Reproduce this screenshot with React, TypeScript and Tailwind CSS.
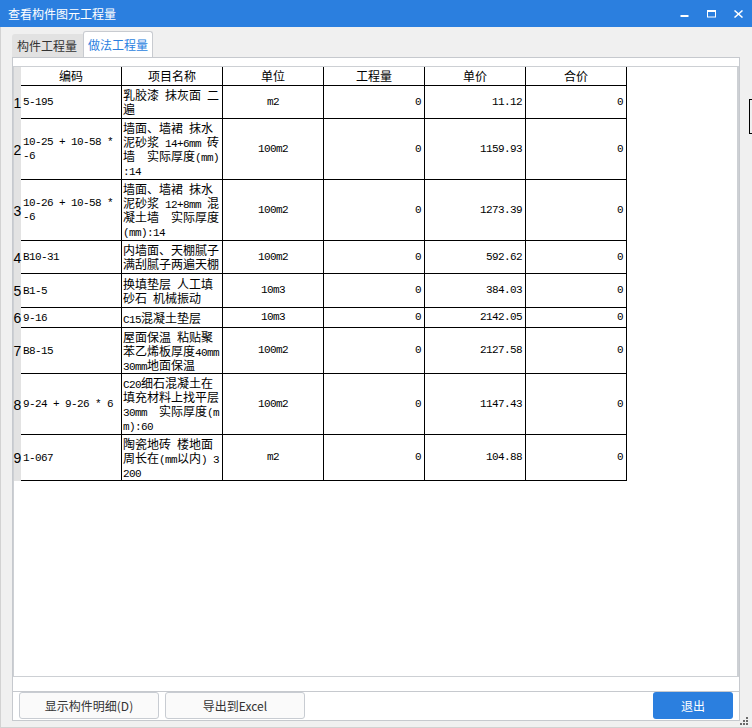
import React from "react";

const cjk = "font-['Noto_Sans_CJK_SC','Noto_Sans',sans-serif]";
const mono = "font-['Liberation_Mono',monospace] text-[11px] tracking-[-0.6px]";

type Row = {
  code: string[];
  name: string[];
  unit: string;
  price: string;
  h: string;
};

const rows: Row[] = [
  { code: ["5-195"], name: ["乳胶漆 抹灰面 二", "遍"], unit: "m2", price: "11.12", h: "h-[33px]" },
  {
    code: ["10-25 + 10-58 *", "-6"],
    name: ["墙面、墙裙 抹水", "泥砂浆 14+6mm 砖", "墙  实际厚度(mm)", ":14"],
    unit: "100m2",
    price: "1159.93",
    h: "h-[61px]",
  },
  {
    code: ["10-26 + 10-58 *", "-6"],
    name: ["墙面、墙裙 抹水", "泥砂浆 12+8mm 混", "凝土墙  实际厚度", "(mm):14"],
    unit: "100m2",
    price: "1273.39",
    h: "h-[61px]",
  },
  { code: ["B10-31"], name: ["内墙面、天棚腻子", "满刮腻子两遍天棚"], unit: "100m2", price: "592.62", h: "h-[33px]" },
  { code: ["B1-5"], name: ["换填垫层 人工填", "砂石 机械振动"], unit: "10m3", price: "384.03", h: "h-[34px]" },
  { code: ["9-16"], name: ["C15混凝土垫层"], unit: "10m3", price: "2142.05", h: "h-[20px]" },
  {
    code: ["B8-15"],
    name: ["屋面保温 粘贴聚", "苯乙烯板厚度40mm", "30mm地面保温"],
    unit: "100m2",
    price: "2127.58",
    h: "h-[46px]",
  },
  {
    code: ["9-24 + 9-26 * 6"],
    name: ["C20细石混凝土在", "填充材料上找平层", "30mm  实际厚度(m", "m):60"],
    unit: "100m2",
    price: "1147.43",
    h: "h-[61px]",
  },
  {
    code: ["1-067"],
    name: ["陶瓷地砖 楼地面", "周长在(mm以内) 3", "200"],
    unit: "m2",
    price: "104.88",
    h: "h-[46px]",
  },
];

// ascii runs get the narrow mono face, like the half-width glyphs in the screenshot
function Mix({ s }: { s: string }) {
  return (
    <>
      {s.split(/([\x20-\x7e]+)/).map((p, i) =>
        /[\x20-\x7e]/.test(p) ? (
          <span key={i} className={mono}>
            {p}
          </span>
        ) : (
          <span key={i}>{p}</span>
        )
      )}
    </>
  );
}

function Header() {
  const labels = ["编码", "项目名称", "单位", "工程量", "单价", "合价"];
  return (
    <div className="flex h-[19px]">
      <div className="w-[7px] bg-[#e3e3e3]" />
      <div className="flex border-b border-black">
        {labels.map((l) => (
          <div
            key={l}
            className={`w-[101px] border-r border-black flex items-center justify-center text-[12px] text-black ${cjk}`}
          >
            {l}
          </div>
        ))}
      </div>
    </div>
  );
}

function DataRow({ r, n }: { r: Row; n: number }) {
  return (
    <div className={`flex ${r.h}`}>
      <div className="w-[7px] bg-[#e3e3e3] flex items-center justify-center text-[14px] leading-none font-['Liberation_Sans',sans-serif] text-black">
        {n}
      </div>
      <div className="flex border-b border-black text-black">
        <div className="w-[101px] border-r border-black flex flex-col justify-center pl-[2px]">
          {r.code.map((c, i) => (
            <div key={i} className={`h-[14px] leading-[14px] whitespace-pre ${mono}`}>
              {c}
            </div>
          ))}
        </div>
        <div className={`w-[101px] border-r border-black flex flex-col justify-center pl-[1px] text-[12px] ${cjk}`}>
          {r.name.map((c, i) => (
            <div key={i} className="h-[14px] leading-[14px] whitespace-pre">
              <Mix s={c} />
            </div>
          ))}
        </div>
        <div className={`w-[101px] border-r border-black flex items-center justify-center ${mono}`}>{r.unit}</div>
        <div className={`w-[101px] border-r border-black flex items-center justify-end pr-[3px] ${mono}`}>0</div>
        <div className={`w-[101px] border-r border-black flex items-center justify-end pr-[3px] ${mono}`}>{r.price}</div>
        <div className={`w-[101px] border-r border-black flex items-center justify-end pr-[3px] ${mono}`}>0</div>
      </div>
    </div>
  );
}

export default function App() {
  return (
    <div className={`relative w-[752px] h-[728px] bg-[#f0f0f0] flex flex-col overflow-hidden ${cjk}`}>
      {/* Title bar */}
      <div className="h-[27px] bg-[#2b7fdf] flex items-center justify-between shrink-0">
        <span className="pl-[8px] text-[12px] text-white">查看构件图元工程量</span>
        <div className="flex h-full">
          <div className="w-[27px] flex items-center justify-center">
            <svg width="9" height="8" viewBox="0 0 9 8">
              <rect x="0.5" y="5" width="8" height="2" fill="white" />
            </svg>
          </div>
          <div className="w-[27px] flex items-center justify-center">
            <svg width="9" height="8" viewBox="0 0 9 8">
              <rect x="0.5" y="0.5" width="8" height="6.5" fill="none" stroke="white" strokeWidth="1" />
              <rect x="0.5" y="0.5" width="8" height="1.5" fill="white" />
            </svg>
          </div>
          <div className="w-[27px] flex items-center justify-center">
            <svg width="9" height="8" viewBox="0 0 9 8">
              <path d="M0.5 0.5 L8.5 7.5 M8.5 0.5 L0.5 7.5" stroke="white" strokeWidth="1.5" />
            </svg>
          </div>
        </div>
      </div>

      <div className="flex-1 flex flex-col border-l border-b border-[#d2d2d2]">
        {/* Tabs */}
        <div className="h-[30px] pl-[11px] flex items-end shrink-0">
          <div className="h-[23px] w-[71px] bg-[#e2e2e2] rounded-tl-[3px] flex items-center pl-[5px] text-[12px] text-[#333]">
            构件工程量
          </div>
          <div className="h-[26px] w-[70px] bg-white border border-b-0 border-[#c8cbd0] rounded-t-[3px] flex items-center justify-center text-[12px] text-[#2b7fdf]">
            做法工程量
          </div>
        </div>

        {/* Panel */}
        <div className="ml-[11px] w-[728px] h-[664px] border border-[#c6c9ce] bg-white flex flex-col">
          <div className="h-[8px]" />
          <div className="h-[611px] border border-r-2 border-[#cdd0d4] bg-white">
            <Header />
            {rows.map((r, i) => (
              <DataRow key={i} r={r} n={i + 1} />
            ))}
          </div>
          <div className="h-[15px] border-b border-[#c6c9ce]" />
          <div className="h-[27px] flex items-stretch px-[6px] text-[12px] text-[#333]">
            <button className="w-[140px] border border-[#c8ccd2] rounded-[3px] bg-[#fafafa] flex items-center justify-center">
              显示构件明细(D)
            </button>
            <button className="ml-[6px] w-[140px] border border-[#c8ccd2] rounded-[3px] bg-[#fafafa] flex items-center justify-center">
              导出到Excel
            </button>
            <div className="flex-1" />
            <button className="w-[80px] rounded-[3px] bg-[#2b7fdf] text-white flex items-center justify-center">
              退出
            </button>
          </div>
        </div>
      </div>

      {/* partly visible frame at the right edge */}
      <div className="absolute left-[749px] top-[99px] w-[10px] h-[35px] border border-black" />

      {/* resize grip */}
      <svg className="absolute right-[3px] bottom-[2px]" width="9" height="9" viewBox="0 0 9 9">
        <g fill="#6b6b6b">
          <rect x="6" y="0" width="2" height="2" />
          <rect x="3" y="3" width="2" height="2" />
          <rect x="6" y="3" width="2" height="2" />
          <rect x="0" y="6" width="2" height="2" />
          <rect x="3" y="6" width="2" height="2" />
          <rect x="6" y="6" width="2" height="2" />
        </g>
      </svg>
    </div>
  );
}
